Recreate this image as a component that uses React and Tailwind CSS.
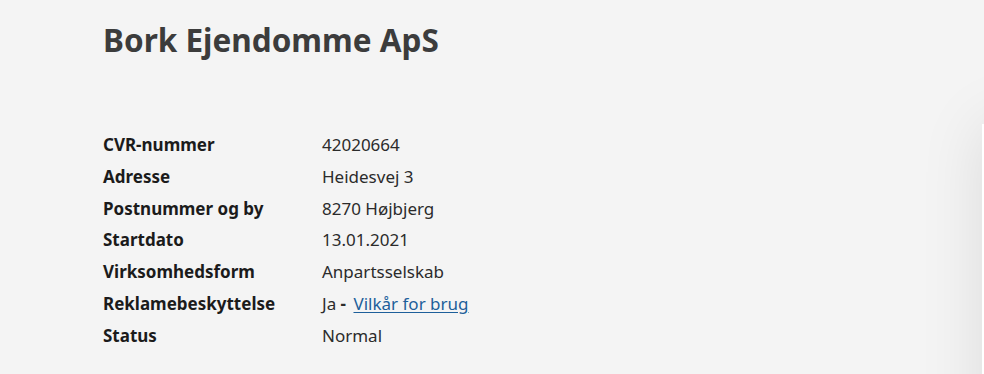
const rows = [
  ["CVR-nummer", "42020664"],
  ["Adresse", "Heidesvej 3"],
  ["Postnummer og by", "8270 Højbjerg"],
  ["Startdato", "13.01.2021"],
  ["Virksomhedsform", "Anpartsselskab"],
  ["Reklamebeskyttelse", null],
  ["Status", "Normal"],
];

export default function App() {
  return (
    <div
      className="relative h-[374px] w-[984px] overflow-hidden bg-[#f4f4f4]"
      style={{ fontFamily: '"Noto Sans", "Open Sans", sans-serif' }}
    >
      {/* side panel peeking in from the right */}
      <div className="absolute left-[982px] top-[124px] h-[400px] w-[300px] bg-white shadow-[0_0_60px_rgba(0,0,0,0.10)]" />

      <div className="pl-[103px] pt-[18px]">
        <h1 className="text-[31.5px] font-bold leading-[44px] text-[#3c3c3c]">
          Bork Ejendomme ApS
        </h1>

        <dl className="mt-[67px] grid grid-cols-[219px_1fr] text-[17px] leading-[31.8px]">
          {rows.map(([label, value]) => (
            <div key={label} className="contents">
              <dt className="font-bold text-[#1b1b1b]">{label}</dt>
              <dd className="text-[#2b2b2b]">
                {value ?? (
                  <>
                    Ja <span className="font-bold">-</span>{" "}
                    <a href="#" className="ml-[3px] text-[#1d5f9a] underline underline-offset-2">
                      Vilkår for brug
                    </a>
                  </>
                )}
              </dd>
            </div>
          ))}
        </dl>
      </div>
    </div>
  );
}
